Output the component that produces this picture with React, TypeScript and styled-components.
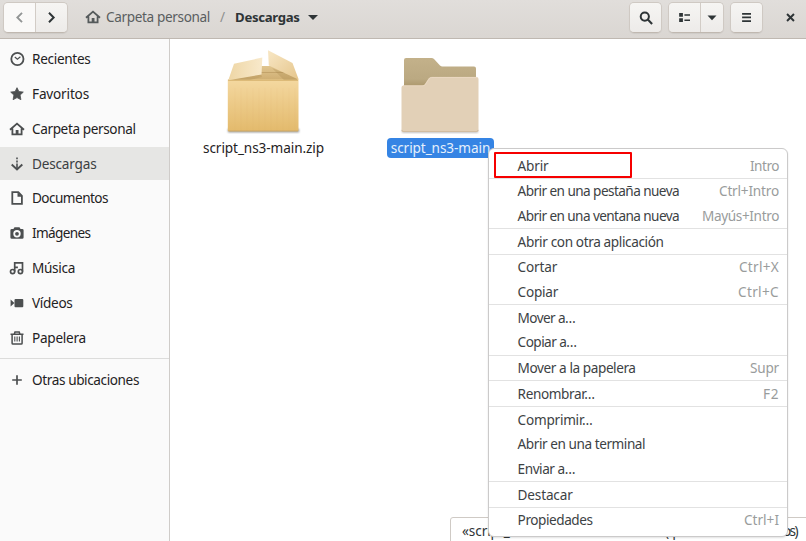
import React, { useLayoutEffect, useRef } from "react";
import styled, { createGlobalStyle } from "styled-components";

const GlobalStyle = createGlobalStyle`
  * { box-sizing: border-box; }
  html, body, #root { margin: 0; height: 100%; overflow: hidden; }
  body { font: 13.6px/20px "Noto Sans", "Open Sans", sans-serif; color: #2e3436; background: #fff; }
`;

const Window = styled.div`
  position: relative;
  width: 806px;
  height: 541px;
  overflow: hidden;
  display: flex;
  flex-direction: column;
  background: #fff;
`;
const Header = styled.header`
  height: 39px;
  flex: none;
  display: flex;
  align-items: flex-start;
  padding: 2px 8px 0 3px;
  background: linear-gradient(#e1dedb, #dad6d2);
  border-bottom: 1px solid #bfb8b1;
`;
const ButtonGroup = styled.div<{ $gap?: number }>`
  display: flex;
  height: 31px;
  margin-right: ${(p) => p.$gap ?? 0}px;
  border: 1px solid #cfc9c3;
  border-bottom-color: #c0b8b0;
  border-radius: 5px;
  overflow: hidden;
  box-shadow: 0 1px 1px rgba(0, 0, 0, 0.06);
`;
const ToolButton = styled.button<{ $w: number; $off?: boolean }>`
  width: ${(p) => p.$w}px;
  padding: 0;
  border: 0;
  display: flex;
  align-items: center;
  justify-content: center;
  color: ${(p) => (p.$off ? "#929595" : "#2e3436")};
  background: ${(p) => (p.$off ? "#faf9f8" : "linear-gradient(#f6f5f3, #edebe9)")};
  & + & { border-left: 1px solid #d2ccc6; }
`;
const Path = styled.nav`
  display: flex;
  align-items: center;
  height: 30px;
  margin-left: 17px;
  flex: 1;
  color: #555a5b;
`;
const Crumb = styled.span<{ $bold?: boolean }>`
  margin-left: ${(p) => (p.$bold ? 10 : 5)}px;
  color: ${(p) => (p.$bold ? "#2e3436" : "#5a5e5f")};
  font-weight: ${(p) => (p.$bold ? 700 : 400)};
  font-size: ${(p) => (p.$bold ? 13.2 : 13.6)}px;
`;
const Slash = styled.span`
  margin-left: 10px;
  color: #8e908f;
`;
const Caret = styled.span`
  margin-left: 8px;
  border: 5px solid transparent;
  border-top-color: #2e3436;
  border-bottom: 0;
`;
const CloseButton = styled.button`
  width: 15px;
  height: 30px;
  padding: 0;
  border: 0;
  background: none;
  color: #2e3436;
  display: flex;
  align-items: center;
  justify-content: center;
`;
const Body = styled.div`
  flex: 1;
  min-height: 0;
  display: flex;
`;
const Sidebar = styled.aside`
  width: 170px;
  flex: none;
  padding-top: 3.5px;
  background: #fafafa;
  border-right: 1px solid #cfccc9;
`;
const Place = styled.div<{ $active?: boolean }>`
  height: 33px;
  margin-bottom: 1.86px;
  padding-left: 9px;
  display: flex;
  align-items: center;
  gap: 7px;
  color: ${(p) => (p.$active ? "#3b4042" : "#1f2223")};
  background: ${(p) => (p.$active ? "#e6e6e4" : "transparent")};
  svg { color: #4c4f50; }
`;
const PlaceDivider = styled.div`
  height: 1px;
  margin: 3.3px 0 5px;
  background: #dcdcdb;
`;
const Files = styled.main`
  flex: 1;
  display: flex;
  align-items: flex-start;
  padding: 9px 0 0 28px;
`;
const FileItem = styled.div<{ $gap?: number }>`
  width: 131px;
  margin-right: ${(p) => p.$gap ?? 0}px;
  display: flex;
  flex-direction: column;
  align-items: center;
`;
const FileName = styled.div<{ $selected?: boolean }>`
  height: 20px;
  margin-top: 4px;
  padding: 0 4px;
  border-radius: 4px;
  color: ${(p) => (p.$selected ? "#e5f0fc" : "#1f2223")};
  background: ${(p) => (p.$selected ? "#3584e4" : "transparent")};
`;
const StatusPopup = styled.div`
  position: absolute;
  left: 450px;
  top: 517px;
  width: 358px;
  height: 26px;
  padding: 3px 0 0 11px;
  display: flex;
  gap: 5px;
  border: 1px solid #cfcac5;
  border-radius: 3px 0 0 0;
  background: #fff;
`;
const Menu = styled.div`
  position: absolute;
  left: 488px;
  top: 148px;
  width: 300px;
  height: 389px;
  padding-top: 4.3px;
  border: 1px solid #cbcaca;
  border-radius: 6px;
  background: #fff;
  box-shadow: 0 1px 2px rgba(0, 0, 0, 0.12);
`;
const MenuSection = styled.div`
  & + & { border-top: 1px solid #e2e2e2; }
`;
const MenuRow = styled.div`
  height: 24.7px;
  display: flex;
  align-items: center;
  justify-content: space-between;
  padding: 0 8px 0 28.6px;
  color: #3d4244;
`;
const Shortcut = styled.span`
  color: #999c9c;
`;
const Highlight = styled.div`
  position: absolute;
  left: 494px;
  top: 152px;
  width: 138px;
  height: 26px;
  border: 2px solid #f60000;
  border-radius: 1px;
`;
const TextSpan = styled.span`
  display: inline-block;
  white-space: nowrap;
`;

/** Single-line label whose tracking is adjusted to fill a given width. */
function Label({ text, w }: { text: string; w: number }) {
  const ref = useRef<HTMLSpanElement>(null);
  useLayoutEffect(() => {
    const el = ref.current;
    if (!el) return;
    el.style.letterSpacing = "0px";
    const natural = el.getBoundingClientRect().width;
    el.style.letterSpacing = `${(w - natural) / text.length}px`;
  }, [text, w]);
  return <TextSpan ref={ref}>{text}</TextSpan>;
}

const icons: Record<string, React.ReactNode> = {
  clock: (
    <g fill="none" stroke="currentColor" strokeWidth="1.8">
      <circle cx="8.4" cy="8" r="6.1" />
      <path d="M5.8 6 8.4 8.3 11.4 5.8" strokeWidth="1.2" />
    </g>
  ),
  star: <path fill="currentColor" stroke="currentColor" strokeWidth=".8" strokeLinejoin="round" d="m8 1.7 1.9 3.9 4.4.5-3.2 3 .8 4.6L8 11.6l-3.9 2.1.8-4.6-3.2-3 4.4-.5z" />,
  home: (
    <g>
      <path fill="none" stroke="currentColor" strokeWidth="1.8" d="M1 8.7 8 2.6l7 6.1M3.4 7.4v6h9.2v-6" />
      <path fill="currentColor" d="M6.7 9h2.8v5H6.7z" />
    </g>
  ),
  down: (
    <g fill="none" stroke="currentColor" strokeWidth="1.9">
      <path d="m2.7 8.5 5.3 5 5.3-5" />
      <path d="M8 1.6v1.7M8 4.6v1.8M8 7.5v5" strokeWidth="1.6" />
    </g>
  ),
  doc: (
    <g>
      <path fill="none" stroke="currentColor" strokeWidth="1.8" d="M3.3 2.2h6l3.6 3.6v8H3.3z" />
      <path fill="currentColor" d="M8.5 2v4.8H13z" />
    </g>
  ),
  camera: <path fill="currentColor" fillRule="evenodd" d="M5.5 2.2h5L11.6 4h1.6Q14.6 4 14.6 5.3v7.2q0 1.3-1.4 1.3H2.8q-1.4 0-1.4-1.3V5.3Q1.4 4 2.8 4h1.6zM8 5.1a3.7 3.7 0 1 0 0 7.4 3.7 3.7 0 0 0 0-7.4m0 1.8a1.9 1.9 0 1 1 0 3.8 1.9 1.9 0 0 1 0-3.8" />,
  music: (
    <g fill="none" stroke="currentColor" strokeWidth="1.7">
      <circle cx="3.6" cy="11.6" r="2.1" />
      <circle cx="11.4" cy="11.6" r="2.1" />
      <path d="M5.7 11.6V7.3h3.2M5.7 8V2.9h7.8v8.7" />
    </g>
  ),
  video: <path fill="currentColor" d="M6.5 4h6.8q1 0 1 1v6.2q0 1-1 1H6.5q-1 0-1-1V5q0-1 1-1M1.6 4.5 5.4 8l-3.8 3.5z" />,
  trash: (
    <g fill="none" stroke="currentColor" strokeWidth="1.5">
      <path d="M1.5 4.2h13M5.3 4 6 2h4.2l.7 2M3.1 4.5v8.8q0 .8.8.8h8.4q.8 0 .8-.8V4.5" />
      <path d="M5.8 6.5v5M8.1 6.5v5M10.4 6.5v5" strokeWidth="1.1" />
    </g>
  ),
  plus: <path stroke="currentColor" strokeWidth="1.7" d="M8 3.2v9.6M3.2 8h9.6" />,
  left: <path fill="none" stroke="currentColor" strokeWidth="2" d="M10.7 3 5.7 8l5 5" />,
  right: <path fill="none" stroke="currentColor" strokeWidth="2.1" d="m5.3 3 5 5-5 5" />,
  search: (
    <g fill="none" stroke="currentColor" strokeWidth="2">
      <circle cx="6.8" cy="6.6" r="4.1" />
      <path d="m9.8 9.6 4.3 4.3" strokeWidth="2.1" />
    </g>
  ),
  list: <path fill="currentColor" d="M2.3 3.2h4v4h-4zM2.3 8.8h4v4h-4zM7.9 4.4h6v1.7h-6zM7.9 10h6v1.7h-6z" />,
  menu: <path fill="currentColor" d="M3.3 3.2h9.5v1.9H3.3zM3.3 7h9.5v1.9H3.3zM3.3 10.8h9.5v1.9H3.3z" />,
  close: <path stroke="currentColor" strokeWidth="2.1" d="m4.3 4.3 7.4 7.4M11.7 4.3l-7.4 7.4" />,
};
function Icon({ name, size = 16 }: { name: string; size?: number }) {
  return (
    <svg width={size} height={size} viewBox="0 0 16 16" aria-hidden="true">
      {icons[name]}
    </svg>
  );
}

function PackageIcon() {
  return (
    <svg width="86" height="86" viewBox="0 0 86 86">
      <defs>
        <linearGradient id="boxFront" x2="0" y2="1"><stop stopColor="#f4d8a0" /><stop offset="1" stopColor="#e3ba6c" /></linearGradient>
        <linearGradient id="boxFlap" x2="1" y2="0"><stop stopColor="#eed6a5" /><stop offset="1" stopColor="#f8e9cb" /></linearGradient>
        <linearGradient id="boxFlapRight" x2="1" y2="1"><stop stopColor="#f8e7c5" /><stop offset="1" stopColor="#e5c58b" /></linearGradient>
        <linearGradient id="boxInside" x2="0" y2="1"><stop stopColor="#e0c58f" /><stop offset="1" stopColor="#cfae72" /></linearGradient>
        <filter id="boxShadow" x="-20%" y="-100%" width="140%" height="300%"><feGaussianBlur stdDeviation="1.3" /></filter>
      </defs>
      <path fill="#000" opacity=".45" filter="url(#boxShadow)" d="M7 81h71v3.3H7z" />
      <path fill="url(#boxInside)" d="M13 18h58l6 14H8z" />
      <path stroke="#c3a36a" d="M38 24.5h32" />
      <path fill="url(#boxFront)" d="M6.8 31.5h70.7v50.7q0 1-1 1H7.8q-1 0-1-1z" />
      <path stroke="#d3ad68" d="M7 32.2h70M7.5 82.8h69.5" />
      <path stroke="#c49a4d" strokeOpacity=".035" d="M14 40v43M20 40v43M26 40v43M32 40v43M38 40v43M44 40v43M50 40v43M56 40v43M62 40v43M68 40v43M74 40v43" />
      <path fill="#9f7e43" opacity=".25" d="m9 32 31-6 1 3-12 3zM51 20l25 10v2H63z" />
      <path fill="url(#boxFlap)" d="M13 15.8 41.3 9.5l-.8 17L7.3 32.2z" />
      <path fill="url(#boxFlapRight)" d="M47 2.2 71.5 15l6.3 16.7-30-14.2z" />
    </svg>
  );
}
function FolderIcon() {
  return (
    <svg width="86" height="86" viewBox="3 0 86 86">
      <defs>
        <linearGradient id="folderBack" x2="0" y2="1"><stop stopColor="#c3b18a" /><stop offset=".7" stopColor="#bba982" /><stop offset="1" stopColor="#a99468" /></linearGradient>
        <filter id="folderShadow" x="-20%" y="-100%" width="140%" height="300%"><feGaussianBlur stdDeviation="1" /></filter>
      </defs>
      <path fill="#000" opacity=".35" filter="url(#folderShadow)" d="M7 82.5h76v2H7z" />
      <path fill="url(#folderBack)" d="M9 12q0-2 2-2h25.5q1.5 0 2.5 1l6 6.5q1 1 2.5 1H79q2 0 2 2V40H9z" />
      <path fill="#e2d0b7" d="M6.5 39.5q0-2 2-2H27q2 0 3-1.5l3.5-5.5q1-1.5 3-1.5h45q2 0 2 2v51q0 2-2 2h-73q-2 0-2-2z" />
      <path fill="none" stroke="#ecdbc5" strokeWidth=".8" d="M8 37.8h20q1.5 0 2.5-1.5l3.7-5.5q1-1.4 2.5-1.4H82" />
      <path fill="none" stroke="#d1bda1" strokeWidth="1.2" d="M7 82q0 1.5 1.5 1.5h73q1.5 0 1.5-1.5" />
    </svg>
  );
}

const places: [string, string, number][] = [
  ["clock", "Recientes", 58.5],
  ["star", "Favoritos", 57],
  ["home", "Carpeta personal", 103.5],
  ["down", "Descargas", 64.5],
  ["doc", "Documentos", 76],
  ["camera", "Imágenes", 58.5],
  ["music", "Música", 43],
  ["video", "Vídeos", 40.5],
  ["trash", "Papelera", 54],
];

type Entry = [string, number, string?, number?];
const sections: Entry[][] = [
  [["Abrir", 31, "Intro", 29]],
  [["Abrir en una pestaña nueva", 161.5, "Ctrl+Intro", 60], ["Abrir en una ventana nueva", 161.5, "Mayús+Intro", 77]],
  [["Abrir con otra aplicación", 146]],
  [["Cortar", 39.5, "Ctrl+X", 40], ["Copiar", 40.5, "Ctrl+C", 41]],
  [["Mover a…", 57.5], ["Copiar a…", 59]],
  [["Mover a la papelera", 118, "Supr", 29]],
  [["Renombrar…", 77, "F2", 16]],
  [["Comprimir…", 75], ["Abrir en una terminal", 127.5], ["Enviar a…", 57.5]],
  [["Destacar", 55]],
  [["Propiedades", 75, "Ctrl+I", 35]],
];

export default function App() {
  return (
    <Window>
      <GlobalStyle />
      <Header>
        <ButtonGroup>
          <ToolButton $w={31} $off><Icon name="left" size={15} /></ToolButton>
          <ToolButton $w={32}><Icon name="right" size={15} /></ToolButton>
        </ButtonGroup>
        <Path>
          <Icon name="home" />
          <Crumb><Label text="Carpeta personal" w={104} /></Crumb>
          <Slash>/</Slash>
          <Crumb $bold><Label text="Descargas" w={64.5} /></Crumb>
          <Caret />
        </Path>
        <ButtonGroup $gap={6}><ToolButton $w={31}><Icon name="search" /></ToolButton></ButtonGroup>
        <ButtonGroup $gap={6}>
          <ToolButton $w={31}><Icon name="list" size={15} /></ToolButton>
          <ToolButton $w={23}>
            <svg width="10" height="6" viewBox="0 0 10 6"><path fill="currentColor" d="M.5.5h9L5 5.3z" /></svg>
          </ToolButton>
        </ButtonGroup>
        <ButtonGroup $gap={20}><ToolButton $w={31}><Icon name="menu" size={15} /></ToolButton></ButtonGroup>
        <CloseButton><Icon name="close" size={15} /></CloseButton>
      </Header>
      <Body>
        <Sidebar>
          {places.map(([icon, text, w]) => (
            <Place key={text} $active={text === "Descargas"}>
              <Icon name={icon} />
              <Label text={text} w={w} />
            </Place>
          ))}
          <PlaceDivider />
          <Place><Icon name="plus" /><Label text="Otras ubicaciones" w={107} /></Place>
        </Sidebar>
        <Files>
          <FileItem $gap={46}>
            <PackageIcon />
            <FileName><Label text="script_ns3-main.zip" w={121} /></FileName>
          </FileItem>
          <FileItem>
            <FolderIcon />
            <FileName $selected><Label text="script_ns3-main" w={99.5} /></FileName>
          </FileItem>
        </Files>
      </Body>
      <StatusPopup>
        <Label text="«script_ns3-main» seleccionado" w={198} />
        <Label text="(que contiene 6 elementos)" w={132} />
      </StatusPopup>
      <Menu>
        {sections.map((rows, i) => (
          <MenuSection key={i}>
            {rows.map(([text, w, keys, kw]) => (
              <MenuRow key={text}>
                <Label text={text} w={w} />
                {keys && <Shortcut><Label text={keys} w={kw ?? 0} /></Shortcut>}
              </MenuRow>
            ))}
          </MenuSection>
        ))}
      </Menu>
      <Highlight />
    </Window>
  );
}
